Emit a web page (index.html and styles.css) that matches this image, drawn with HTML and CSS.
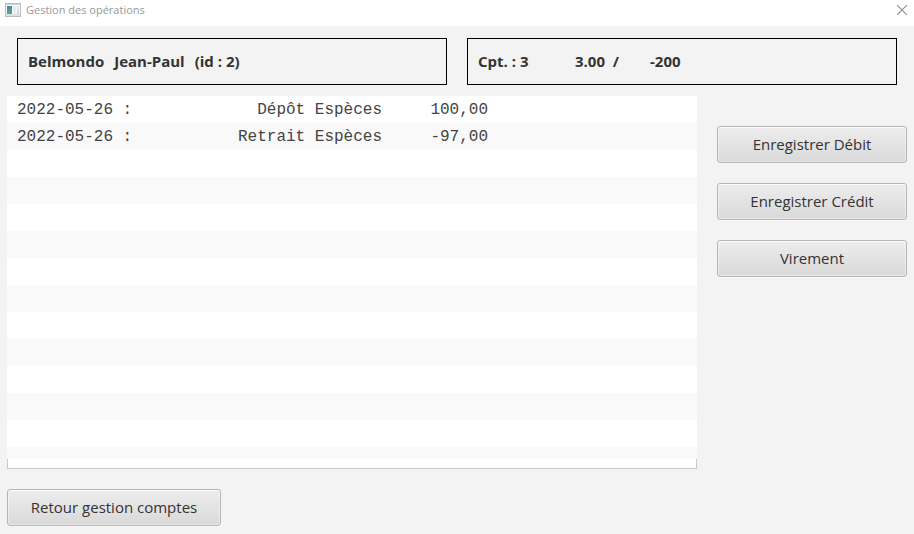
FILE: index.html
```html
<!DOCTYPE html>
<html lang="fr">
<head>
<meta charset="utf-8">
<title>Gestion des opérations</title>
<link rel="stylesheet" href="styles.css">
</head>
<body>
<header class="titlebar">
  <svg class="app-icon" width="16" height="14" viewBox="0 0 16 14" aria-hidden="true">
    <defs>
      <linearGradient id="pane" x1="0" y1="0" x2="0.4" y2="1">
        <stop offset="0" stop-color="#4a7fb5"/>
        <stop offset="1" stop-color="#4fae78"/>
      </linearGradient>
      <linearGradient id="strip" x1="0" y1="0" x2="0" y2="1">
        <stop offset="0" stop-color="#dfe6ea"/>
        <stop offset="1" stop-color="#c3dccb"/>
      </linearGradient>
    </defs>
    <rect x="0.5" y="0.5" width="15" height="13" fill="#fafafa" stroke="#b5bdc3"/>
    <rect x="1" y="1" width="14" height="1" fill="#cdd4da"/>
    <rect x="1" y="11" width="14" height="2" fill="#dde1e4"/>
    <rect x="2" y="3" width="5" height="8" fill="url(#pane)"/>
    <rect x="8" y="3" width="3" height="8" fill="#ececec"/>
    <rect x="12" y="3" width="2" height="8" fill="url(#strip)"/>
  </svg>
  <h1 class="title">Gestion des opérations</h1>
  <button class="close" type="button" aria-label="Fermer">
    <svg width="10" height="10" viewBox="0 0 10 10" aria-hidden="true">
      <path d="M0 0L10 10M10 0L0 10" stroke="#8f8f8f" stroke-width="1.1" fill="none"/>
    </svg>
  </button>
</header>
<main class="content">
  <section class="summary">
    <div class="box"><span>Belmondo</span><span>Jean-Paul</span><span>(id : 2)</span></div>
    <div class="box account"><span class="number">Cpt. : 3</span><span class="balance">3.00&nbsp; /</span><span>-200</span></div>
  </section>
  <section class="workspace">
    <div class="list">
      <div class="rows">
        <table class="operations">
          <tbody>
            <tr><td class="date">2022-05-26 :</td><td class="label">Dépôt Espèces</td><td class="amount">100,00</td><td></td></tr>
            <tr><td class="date">2022-05-26 :</td><td class="label">Retrait Espèces</td><td class="amount">-97,00</td><td></td></tr>
          </tbody>
        </table>
      </div>
      <div class="list-edge"></div>
    </div>
    <nav class="actions">
      <button class="btn" type="button">Enregistrer Débit</button>
      <button class="btn" type="button">Enregistrer Crédit</button>
      <button class="btn" type="button">Virement</button>
    </nav>
  </section>
  <footer class="footer">
    <button class="btn back" type="button">Retour gestion comptes</button>
  </footer>
</main>
</body>
</html>
```
FILE: styles.css
```css
* {
  box-sizing: border-box;
}

body {
  margin: 0;
  min-height: 100vh;
  display: flex;
  flex-direction: column;
  background: #f3f3f3;
  color: #333;
  font-family: "Segoe UI", "Open Sans", sans-serif;
  font-size: 15px;
}

.titlebar {
  display: flex;
  align-items: center;
  gap: 5px;
  height: 26px;
  padding: 0 7px 6px 5px;
  background: #fff;
}

.title {
  flex: 1;
  margin: 0;
  color: #999;
  font-size: 11px;
  font-weight: 400;
  line-height: 18px;
}

.close {
  display: flex;
  padding: 0;
  border: 0;
  background: none;
}

.content {
  flex: 1;
  display: flex;
  flex-direction: column;
  padding: 12px 7px 8px;
}

.summary {
  display: flex;
  gap: 20px;
  padding: 0 10px;
}

.box {
  flex: 1;
  display: flex;
  align-items: center;
  gap: 10px;
  height: 47px;
  padding: 0 10px 2px;
  border: 1px solid #000;
  font-size: 15px;
  font-weight: 700;
  white-space: nowrap;
}

.account {
  gap: 0;
}

.number {
  width: 97px;
}

.balance {
  width: 75px;
}

.workspace {
  flex: 1;
  display: flex;
  gap: 20px;
  margin-top: 11px;
}

.list {
  flex: 1;
  display: flex;
  flex-direction: column;
}

.rows {
  flex: 1;
  background: repeating-linear-gradient(#fff 0 27px, #f9f9f9 27px 54px);
}

.list-edge {
  height: 10px;
  border: 1px solid #c8c8c8;
  border-top: 0;
  background: #fff;
}

.operations {
  width: 100%;
  table-layout: fixed;
  border-collapse: collapse;
  color: #444;
  font-family: "Liberation Mono", monospace;
  font-size: 16px;
  line-height: 25px;
}

.operations td {
  height: 27px;
  padding: 2px 0 0;
  white-space: nowrap;
}

.operations .date {
  width: 135px;
  padding-left: 10px;
}

.operations .label {
  width: 240px;
  text-align: right;
}

.operations .amount {
  width: 106px;
  text-align: right;
}

.actions {
  display: flex;
  flex-direction: column;
  gap: 20px;
  width: 190px;
  padding-top: 30px;
}

.btn {
  height: 37px;
  padding: 0 20px 2px;
  border: 1px solid #b5b5b5;
  border-radius: 3px;
  background: linear-gradient(#ededed, #d9d9d9);
  box-shadow: inset 0 0 0 1px rgba(255, 255, 255, 0.4), inset 0 1px 0 #fafafa, 0 1px 0 #fafafa;
  color: #333;
  font: inherit;
}

.footer {
  margin-top: 20px;
}

.back {
  min-width: 214px;
}
```
